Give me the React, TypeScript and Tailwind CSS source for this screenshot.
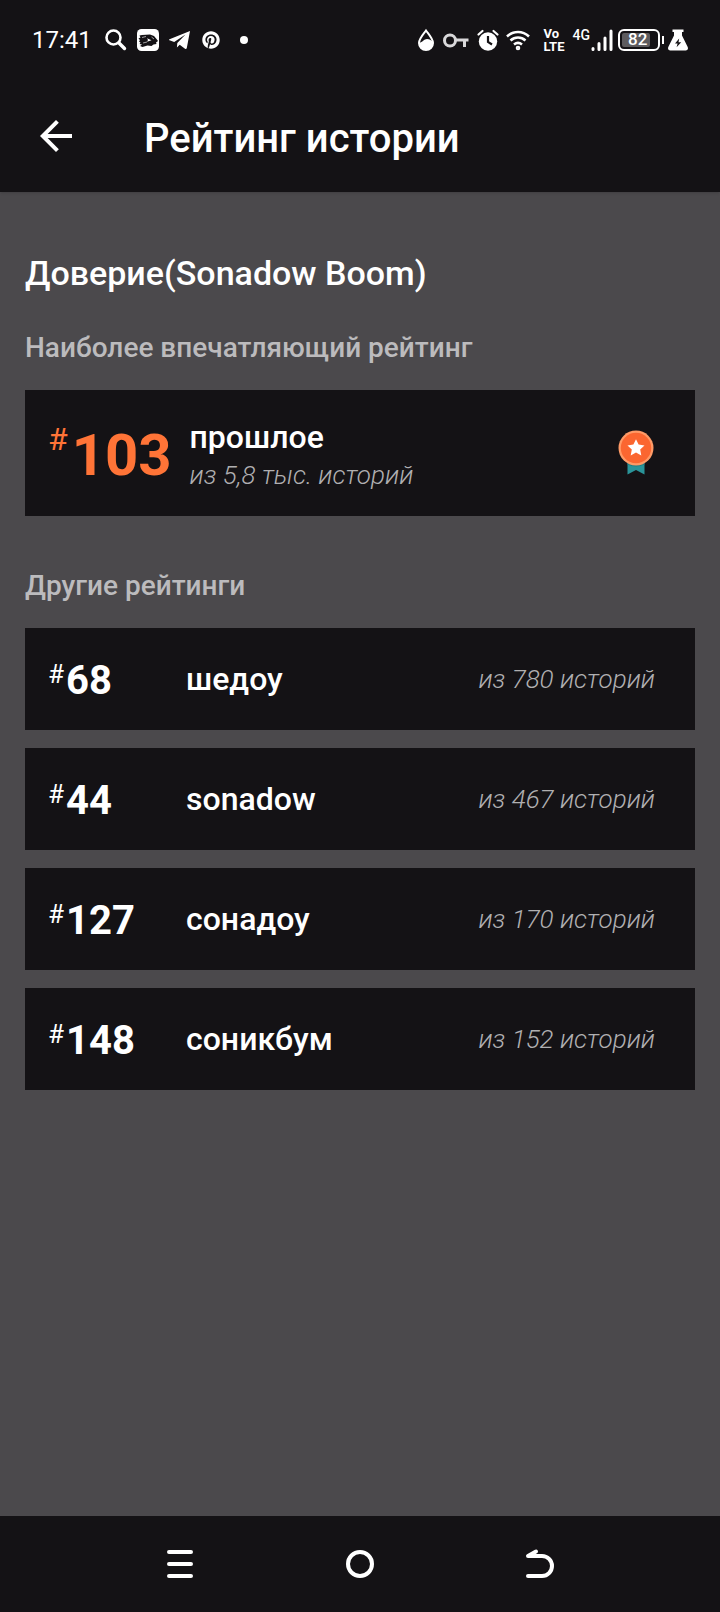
import React from 'react'
import { FaPinterest } from 'react-icons/fa'

type Ranking = {
  position: number
  tag: string
  total: string
}

const bestRanking: Ranking = { position: 103, tag: 'прошлое', total: 'из 5,8 тыс. историй' }

const otherRankings: Ranking[] = [
  { position: 68, tag: 'шедоу', total: 'из 780 историй' },
  { position: 44, tag: 'sonadow', total: 'из 467 историй' },
  { position: 127, tag: 'сонадоу', total: 'из 170 историй' },
  { position: 148, tag: 'соникбум', total: 'из 152 историй' },
]

const StatusBar = () => (
  <div className="flex h-20 items-center justify-between px-8">
    <div className="flex items-center">
      <span className="text-2xl">17:41</span>
      <svg className="ml-3 h-6 w-6" viewBox="0 0 24 24" fill="none" stroke="currentColor">
        <circle cx="9.500" cy="9.5" r="7" strokeWidth="2.6" />
        <path d="M15 15l5.500 5.500" strokeWidth="3.4" strokeLinecap="round" />
      </svg>
      <svg className="ml-2 h-6 w-6" viewBox="0 0 24 24" fill="currentColor">
        <rect x="1" y="1" width="22" height="22" rx="4.5" />
        <path
          d="M3.500 7.500l2.500-.5 8-.5 4 1.500 2.500 3 1.500 2-2 1.500.5 1.500-3 .5-2 1.500-4-.5-5 1.500-2.500-1 2-1.500-2.500-.5 1-1.500-1.500-1 1-1.500-1.500-1.500 2-1z"
          fill="#141215"
        />
        <path d="M6 9.500l4-1M7 15l4-1M15.500 9l2.500 2" fill="none" stroke="currentColor" strokeWidth="0.6" />
        <path d="M11 10.200l4.500 2-4.500 1.600 1-1.700z" />
      </svg>
      <svg className="ml-2 h-6 w-6" viewBox="0 0 24 24" fill="currentColor">
        <path d="M22 3L1.500 11.200c-.6.300-.6.900 0 1.100l4.700 1.600L17.500 6.500 9.300 15l-.4 4.500 2.800-2.700 5.300 4c.8.500 1.600.2 1.800-.7z" />
      </svg>
      <FaPinterest className="ml-2.5 h-[18px] w-[18px]" />
      <span className="ml-5 h-2 w-2 rounded-full bg-white" />
    </div>

    <div className="flex items-center">
      <svg className="h-6 w-5" viewBox="0 0 20 24" fill="none" stroke="currentColor">
        <path d="M10 2.500C7.500 6 3 10.500 3 15a7 7 0 0 0 14 0C17 10.500 12.500 6 10 2.500z" strokeWidth="2" />
        <path d="M3 14.500c3 .5 5-3.500 8-3.500 2.500 0 4 1 6 3v1a7 7 0 0 1-14 0z" fill="currentColor" stroke="none" />
      </svg>
      <svg className="ml-1.5 h-6 w-7" viewBox="0 0 28 24" fill="none" stroke="#d9d8da" strokeWidth="3">
        <circle cx="8" cy="12.500" r="5.500" />
        <path d="M13.500 12h13M22.500 12v7" />
      </svg>
      <svg className="ml-1.5 h-6 w-6" viewBox="0 0 24 24" fill="currentColor">
        <circle cx="12" cy="13.500" r="9.200" />
        <path d="M2.500 6.500l4-3.500M21.500 6.500l-4-3.500" fill="none" stroke="currentColor" strokeWidth="2.200" strokeLinecap="round" />
        <path d="M12 8v6l4 2.500" fill="none" stroke="#141215" strokeWidth="2.200" />
      </svg>
      <svg className="ml-1.5 h-6 w-6" viewBox="0 0 24 24" fill="none" stroke="currentColor" strokeWidth="2.600">
        <path d="M1 8.500c6.500-6 15.500-6 22 0M4.500 12.500c4.500-4 10.500-4 15 0M8 16.500c2.500-2 5.500-2 8 0" />
        <circle cx="12" cy="20" r="1" />
      </svg>
      <span className="ml-3.5 flex flex-col text-[13px] leading-[13px] font-bold">
        <span>Vo</span>
        <span>LTE</span>
      </span>
      <span className="ml-2 self-start text-sm leading-[16px] font-medium">4G</span>
      <svg className="h-6 w-6" viewBox="0 0 24 24" fill="none" stroke="currentColor" strokeWidth="3" strokeLinecap="round">
        <path d="M3 20.500v1M9 15.500v6M15 10v11.500M21 3v18.500" />
      </svg>
      <span className="ml-1 flex h-[22px] w-[42px] items-center rounded-md border-2 border-white p-0.5">
        <span className="relative h-full w-7 rounded-xs bg-[#5d5b5e]">
          <span className="absolute inset-y-0 left-1.5 flex items-center text-[17px] font-medium">82</span>
        </span>
      </span>
      <span className="ml-0.5 h-2 w-0.5 bg-white" />
      <svg className="ml-1 h-6 w-5" viewBox="0 0 20 24" fill="currentColor">
        <path d="M4.500 1.500h11v2.500H14v3.500L19.700 19c.8 1.800-.2 3.500-2 3.500H2.300c-1.800 0-2.800-1.700-2-3.500L6 7.500V4H4.500z" />
        <path d="M11.200 10.500L7 15.500h2.600l-1 3.800 4.600-5h-2.700z" fill="#141215" />
      </svg>
    </div>
  </div>
)

const Medal = () => (
  <svg className="h-12 w-9" viewBox="0 0 36 48" role="img" aria-label="Медаль">
    <path d="M9.500 30h17v15.500L18 41l-8.500 4.500z" fill="#2a9499" />
    <path d="M9.500 33.500c5.500 3 11.500 3 17 0v2c-5.500 2.500-11.500 2.500-17 0z" fill="#1d7f84" />
    <circle cx="18" cy="19" r="17.500" fill="#ff9a66" />
    <circle cx="18" cy="19" r="15.200" fill="#fb6630" />
    <path d="M18 10.200l2.600 5.400 5.900.8-4.300 4.100 1.100 5.900-5.300-2.900-5.300 2.900 1.100-5.900-4.300-4.100 5.900-.8z" fill="#fff" />
  </svg>
)

const RankingRow = ({ position, tag, total }: Ranking) => (
  <li className="flex h-[102px] items-center bg-[#141215] pl-[23px] pr-10">
    <div className="flex w-[138px] items-start pt-1">
      <span className="text-[26px] leading-[34px]">#</span>
      <span className="pl-0.5 text-[40px] leading-[48px] font-bold">{position}</span>
    </div>
    <span className="flex-1 text-[32px] leading-10 font-medium">{tag}</span>
    <span className="text-[26px] leading-8 font-light text-[#b0afb1] italic">{total}</span>
  </li>
)

const NavigationBar = () => (
  <nav className="flex h-24 items-center justify-center gap-[132px] bg-[#141215]">
    <button type="button" aria-label="Меню" className="flex h-12 w-12 items-center justify-center">
      <svg className="h-8 w-8" viewBox="0 0 32 32" fill="none" stroke="currentColor" strokeWidth="4" strokeLinecap="round">
        <path d="M5 4h22M5 16h22M5 28h22" />
      </svg>
    </button>
    <button type="button" aria-label="Домой" className="flex h-12 w-12 items-center justify-center">
      <svg className="h-8 w-8" viewBox="0 0 32 32" fill="none" stroke="currentColor" strokeWidth="4">
        <circle cx="16" cy="16" r="12" />
      </svg>
    </button>
    <button type="button" aria-label="Назад" className="flex h-12 w-12 items-center justify-center">
      <svg className="h-8 w-8" viewBox="0 0 32 32" fill="none" stroke="currentColor" strokeWidth="4" strokeLinecap="round" strokeLinejoin="round">
        <path d="M4 28h14a10 10 0 0 0 0-20H4l8-4.500" />
      </svg>
    </button>
  </nav>
)

export default function App() {
  return (
    <div className="flex min-h-screen flex-col bg-[#4b494c] font-[Roboto,'Noto_Sans',sans-serif] text-white">
      <header className="bg-[#141215] shadow-sm">
        <StatusBar />
        <div className="flex h-28 items-center pl-8">
          <button type="button" aria-label="Назад" className="h-12 w-12">
            <svg viewBox="0 0 24 24" fill="currentColor">
              <path d="M20 11H7.830l5.590-5.590L12 4l-8 8 8 8 1.410-1.410L7.830 13H20z" />
            </svg>
          </button>
          <h1 className="pt-1.5 pl-16 text-[40px] leading-[48px] font-medium">Рейтинг истории</h1>
        </div>
      </header>

      <main className="flex-1 px-[25px] pt-[61px]">
        <h2 className="text-[34px] leading-10 font-medium">Доверие(Sonadow Boom)</h2>

        <h3 className="mt-[39px] text-[28px] leading-8 font-medium text-[#bcbbbd]">Наиболее впечатляющий рейтинг</h3>
        <section className="mt-[26px] flex h-[126px] items-center bg-[#141215] pl-[23px] pr-[41px]">
          <div className="flex items-start pt-1 text-[#ff7437]">
            <span className="text-[32px] leading-9">#</span>
            <span className="pl-1 text-[58px] leading-[68px] font-bold">{bestRanking.position}</span>
          </div>
          <div className="flex flex-1 flex-col pt-1 pl-[18px]">
            <span className="text-[32px] leading-10 font-medium">{bestRanking.tag}</span>
            <span className="text-[26px] leading-9 font-light text-[#b0afb1] italic">{bestRanking.total}</span>
          </div>
          <Medal />
        </section>

        <h3 className="mt-[54px] text-[28px] leading-8 font-medium text-[#bcbbbd]">Другие рейтинги</h3>
        <ul className="mt-[26px] flex flex-col gap-[18px]">
          {otherRankings.map((ranking) => (
            <RankingRow key={ranking.tag} {...ranking} />
          ))}
        </ul>
      </main>

      <NavigationBar />
    </div>
  )
}
